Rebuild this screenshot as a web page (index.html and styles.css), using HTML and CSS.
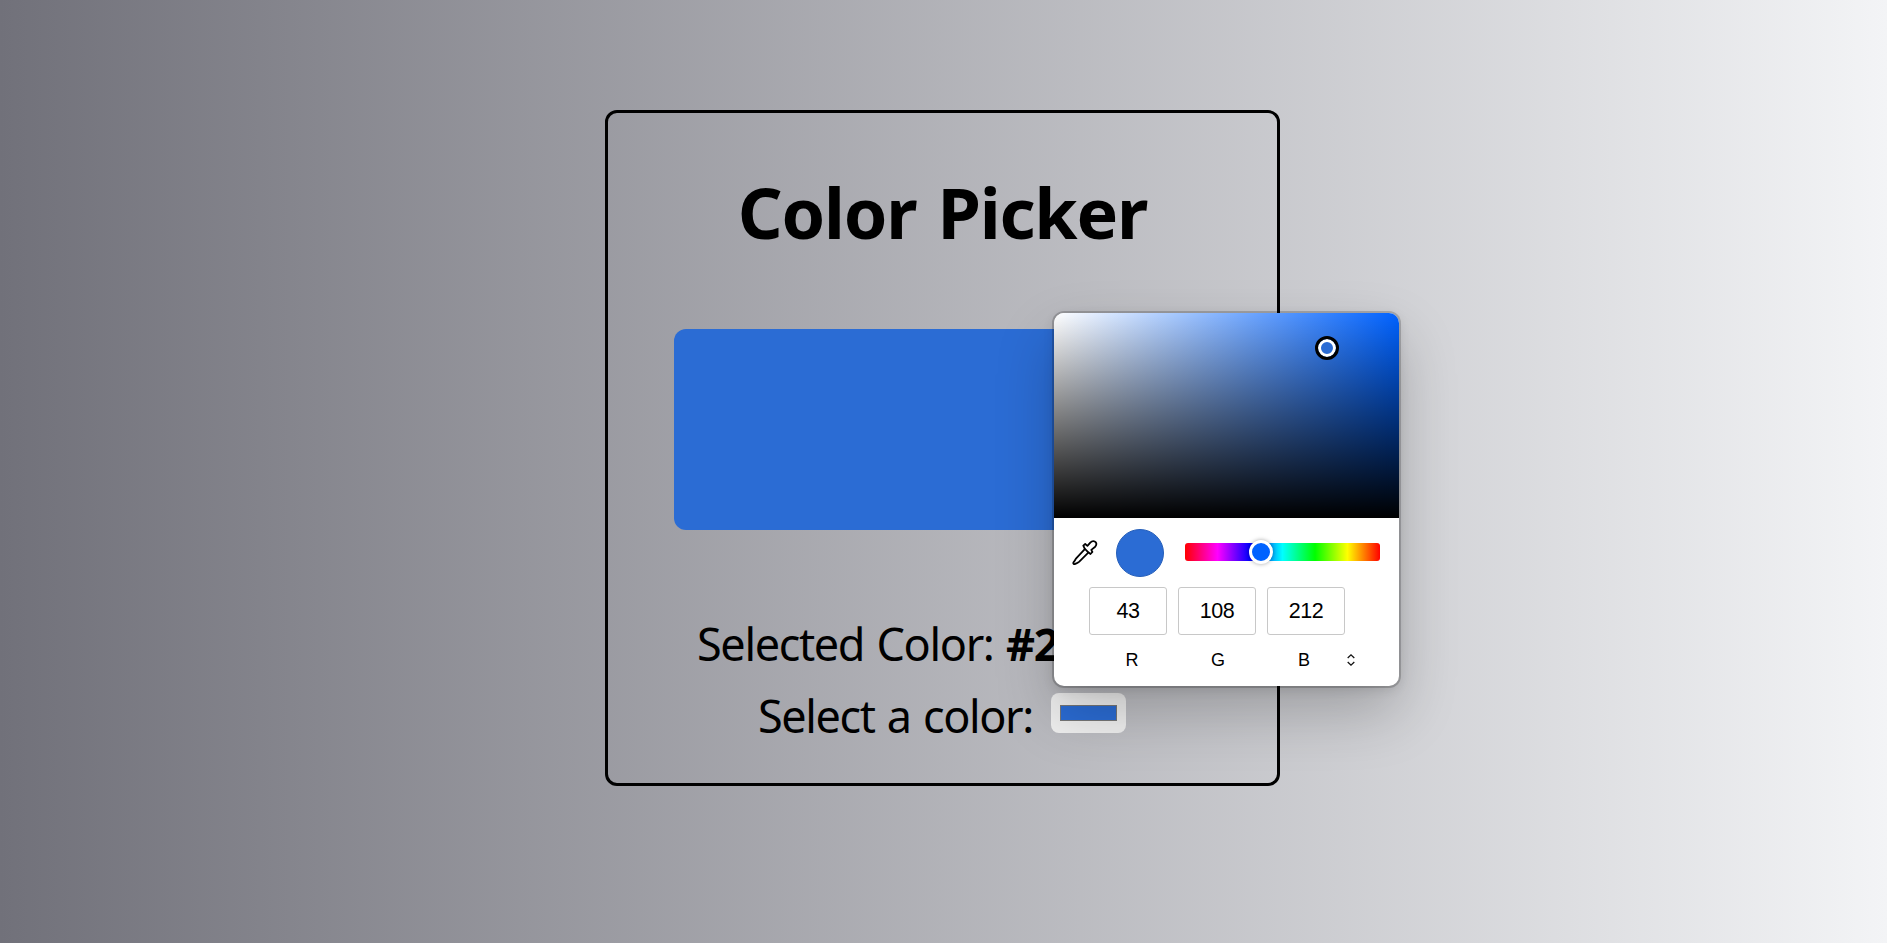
FILE: index.html
```html
<!DOCTYPE html>
<html lang="en">
<head>
<meta charset="utf-8">
<title>Color Picker</title>
<link rel="stylesheet" href="styles.css">
</head>
<body>
<main class="card">
  <h1 class="title">Color Picker</h1>
  <div class="preview"></div>
  <p class="line selected"><span class="label-selected">Selected Color:</span> <strong>#2</strong></p>
  <div class="line chooser"><span class="label-select">Select a color:</span><span class="well"><span class="well-color"></span></span></div>
</main>
<section class="popup">
  <div class="field"><span class="field-ring"></span></div>
  <div class="controls">
    <svg class="dropper" viewBox="0 0 26 26" fill="none" stroke="#000" stroke-width="1.8" stroke-linejoin="round" stroke-linecap="round"><path d="M12.8 9.2 L4.4 18.2 C3.2 19.6 2.6 21 1.6 22.2 C.7 23.5 2 24.6 3.2 23.9 C4.5 23.2 5.9 22.9 7.3 21.6 L16.3 12.7"/><path d="M11.3 5.6 L13.2 4 L15.4 5.9 L18.3 2.6 C20.3.5 22.7 1 23.8 2.3 C24.7 3.7 24.4 5.5 22.9 7 L19.3 9.9 L20.4 12 L18.5 14 L16.3 12.3 L12.7 8.6 Z"/></svg>
    <span class="swatch"></span>
    <span class="hue"><span class="hue-thumb"></span></span>
  </div>
  <div class="values"><span class="value">43</span><span class="value">108</span><span class="value">212</span></div>
  <div class="names"><span class="name">R</span><span class="name">G</span><span class="name">B</span>
    <svg class="toggle" viewBox="0 0 8 12" fill="none" stroke="#111" stroke-width="1.3"><path d="M.7 4 L4 .9 L7.3 4 M.7 8 L4 11.1 L7.3 8"/></svg>
  </div>
</section>
</body>
</html>
```
FILE: styles.css
```css
* { box-sizing: border-box; }
body {
  margin: 0;
  height: 943px;
  overflow: hidden;
  padding-top: 110px;
  font-family: "Noto Sans", "Open Sans", sans-serif;
  color: #000;
  background: linear-gradient(90deg, #71717a, #f3f4f6);
}
.card {
  width: 675px;
  height: 676px;
  margin-left: 605px;
  border: 3px solid #000;
  border-radius: 12px;
  display: flex;
  flex-direction: column;
  align-items: center;
}
.title { margin: 50px 0 0; font-size: 70px; line-height: 98px; white-space: nowrap; letter-spacing: -1.2px; word-spacing: 4px; }
.preview { width: 539px; height: 201px; margin: 68px 0 0 1px; border-radius: 12px; background: #2b6cd4; }
.line { margin: 0; width: 100%; font-size: 45px; line-height: 60px; white-space: nowrap; }
.selected { margin-top: 84px; padding-left: 89px; letter-spacing: -1.35px; word-spacing: 2px; }
.chooser { display: flex; align-items: center; margin-top: 12px; padding-left: 150px; letter-spacing: -1.4px; word-spacing: 2px; }
.well { width: 75px; height: 40px; margin: -7px 0 0 18px; padding: 12px 9px; border-radius: 8px; background: #efefef; }
.well-color { display: block; height: 16px; border: 1px solid #777; background: #2b6cd4; }
.popup {
  position: absolute;
  left: 1054px;
  top: 313px;
  width: 345px;
  height: 373px;
  border-radius: 10px;
  background: #fff;
  font-family: "Liberation Sans", Arial, sans-serif;
  box-shadow: 0 0 0 2px rgba(0,0,0,.18), 0 3px 12px rgba(0,0,0,.12), 0 26px 58px rgba(0,0,0,.22);
}
.field {
  position: relative;
  height: 205px;
  border-radius: 10px 10px 0 0;
  background: linear-gradient(to top, #000, transparent), linear-gradient(to right, #fff, #0062ff);
}
.field-ring { position: absolute; left: 261px; top: 23px; width: 24px; height: 24px; border: 3px solid #000; border-radius: 50%; background: #2b6cd4; box-shadow: inset 0 0 0 3px #fff; }
.controls { display: flex; align-items: flex-start; padding: 11px 0 0 18px; height: 69px; }
.dropper { width: 26px; height: 26px; margin-top: 11px; }
.swatch { width: 48px; height: 48px; margin-left: 18px; border-radius: 50%; background: #2b6cd4; border: 1px solid #265fba; }
.hue { position: relative; width: 195px; height: 18px; margin: 14px 0 0 21px; border-radius: 3px; background: linear-gradient(to left, #f00 0%, #ff0 16.7%, #0f0 33.3%, #0ff 50%, #00f 66.7%, #f0f 83.3%, #f00 100%); }
.hue-thumb { position: absolute; left: 64px; top: -3px; width: 24px; height: 24px; border: 3px solid #fff; border-radius: 50%; background: #0062ff; box-shadow: 0 0 4px rgba(0,0,0,.35); }
.values { display: flex; gap: 11px; padding-left: 35px; }
.value { width: 78px; height: 48px; border: 1px solid #c8c8c8; border-radius: 3px; font-size: 21.5px; line-height: 46px; letter-spacing: -.4px; text-align: center; }
.names { display: flex; align-items: center; margin-top: 14px; padding-left: 35px; height: 22px; font-size: 18px; }
.name { width: 86px; text-align: center; }
.toggle { width: 8px; height: 12px; }
```
